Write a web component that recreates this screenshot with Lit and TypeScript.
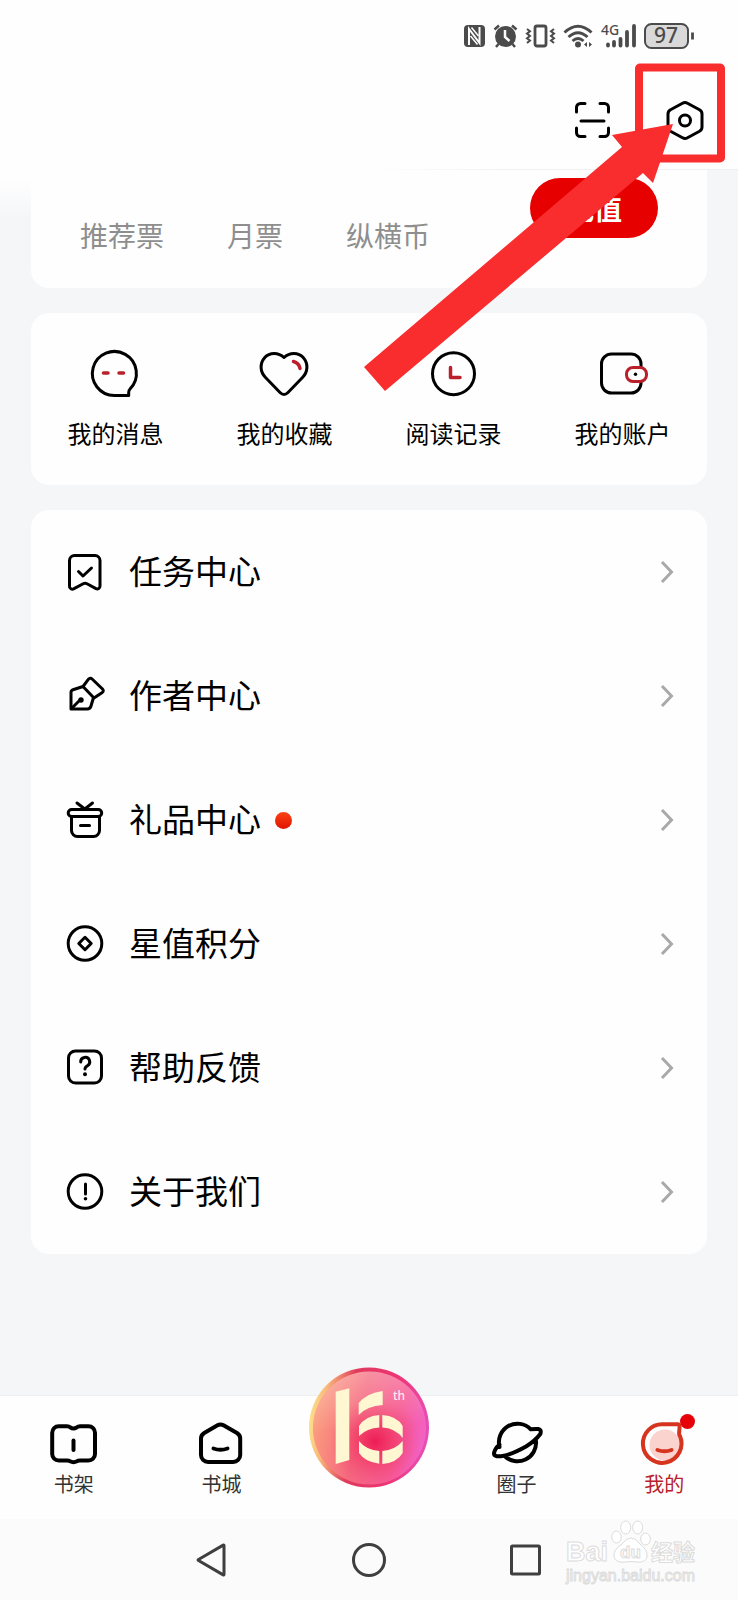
import { LitElement, html, svg, css, nothing, type TemplateResult } from "lit";
import { customElement, state } from "lit/decorators.js";

interface Entry {
  label: string;
  icon: TemplateResult;
  dot?: boolean;
}

const shortcuts: Entry[] = [
  {
    label: "我的消息",
    icon: svg`<path d="M24.5 47.5A22 22 0 1 1 40 41q-1.3 1.2-1.3 3.4v3.1z"/>
      <path class="accent" d="M13.5 25h4.5M29 25h4.5"/>`,
  },
  {
    label: "我的收藏",
    icon: svg`<path d="M25 9.5C19.5 4 10.5 4 5.8 9.5.5 15.5 1 24 6.5 29.5L21 44.5q4 4 8 0l14.500-15C49 24 49.500 15.500 44.200 9.500 39.500 4 30.500 4 25 9.500z"/>
      <path class="accent" d="M34.500 13.500q5.500 1.500 6.500 7"/>`,
  },
  {
    label: "阅读记录",
    icon: svg`<circle cx="25.500" cy="25.700" r="21"/><path class="accent" d="M22.500 19.500V29.500h9.500"/>`,
  },
  {
    label: "我的账户",
    icon: svg`<rect x="4.500" y="6" width="39.500" height="39" rx="10"/>
      <rect class="accent clasp" x="29.500" y="19.500" width="20" height="14" rx="6.500"/>
      <circle class="solid" cx="38.500" cy="26.300" r="1.700"/>`,
  },
];

const menu: Entry[] = [
  {
    label: "任务中心",
    icon: svg`<path d="M8.5 2.5H29a5 5 0 0 1 5 5V33a2.800 2.800 0 0 1-4 2.600l-9-4.800a4 4 0 0 0-3.800 0l-9.200 4.800a2.800 2.800 0 0 1-4.500-2.600V7.500a5 5 0 0 1 5-5z"/>
      <path d="M12.500 18.500l4.500 4.500 8.500-8"/>`,
  },
  {
    label: "作者中心",
    icon: svg`<path d="M5 32V15.500q0-2 2-2.800L17 9.500l10.500 11-2.500 8.500q-.8 3-3.800 3z"/>
      <path d="M17 9.500l5.500-7.300q1.700-2 3.600-.2L36.500 12q1.700 1.800-.2 3.400L28 21M6 31l8-8"/>
      <circle class="solid" cx="15" cy="23" r="2.700"/>`,
  },
  {
    label: "礼品中心",
    dot: true,
    icon: svg`<rect x="2.200" y="8.500" width="33.500" height="7" rx="3.500"/>
      <path d="M5.500 16v13.500a6 6 0 0 0 6 6h16a6 6 0 0 0 6-6V16M11 2l7.800 6L26.500 2M14.500 24.500h9"/>`,
  },
  {
    label: "星值积分",
    icon: svg`<circle cx="19" cy="18.500" r="16.800"/><path d="M19 12.300l6.200 6.200-6.200 6.200-6.200-6.200z"/>`,
  },
  {
    label: "帮助反馈",
    icon: svg`<rect x="2.500" y="2" width="33" height="32" rx="7"/>
      <path d="M14.700 13a4.500 4.500 0 1 1 6.600 3.800q-2.300 1.200-2.300 3.200"/><circle class="solid" cx="19" cy="25.200" r="2"/>`,
  },
  {
    label: "关于我们",
    icon: svg`<circle cx="19" cy="18.500" r="16.800"/><path d="M19.500 11v10"/><circle class="solid" cx="19.500" cy="25.800" r="1.800"/>`,
  },
];

const tabs: Entry[] = [
  {
    label: "书架",
    icon: svg`<path d="M8.700 6.300H17q2 0 3.500 1.200 3 2 6 0Q28 6.300 30 6.300h8.500a6.500 6.500 0 0 1 6.500 6.500V34a6.500 6.500 0 0 1-6.500 6.500H30q-2 0-3 .8-3.500 1.700-7 0-1-.8-3-.8H8.700A6.500 6.500 0 0 1 2.200 34V12.800a6.500 6.500 0 0 1 6.500-6.500z"/><path d="M23.500 20.500v9.500"/>`,
  },
  {
    label: "书城",
    icon: svg`<path d="M20.500 5.300q3-1.800 6 0L40 13q3.200 2 3.200 5.600V35a7 7 0 0 1-7 7H11a7 7 0 0 1-7-7V18.600Q4 15 7.200 13z"/><path d="M16.500 28.500q7 2.600 14 0"/>`,
  },
  {
    label: "16周年",
    icon: svg`
      <defs>
        <linearGradient id="rim" x1="0" y1=".45" x2="1" y2=".55">
          <stop offset="0" stop-color="#fbe08c"/><stop offset=".12" stop-color="#f8b878"/>
          <stop offset=".35" stop-color="#e03a5c"/>
          <stop offset=".7" stop-color="#ee3474"/><stop offset="1" stop-color="#e650b8"/>
        </linearGradient>
        <linearGradient id="face" x1="0" y1=".4" x2="1" y2=".6">
          <stop offset="0" stop-color="#fb9f7e"/><stop offset=".4" stop-color="#f5687e"/>
          <stop offset=".75" stop-color="#f65c96"/><stop offset="1" stop-color="#f262c8"/>
        </linearGradient>
        <radialGradient id="glow" cx=".55" cy=".62" r=".4">
          <stop offset="0" stop-color="#ec1450" stop-opacity=".9"/><stop offset=".4" stop-color="#f02c5c" stop-opacity=".6"/>
          <stop offset="1" stop-color="#f04070" stop-opacity="0"/>
        </radialGradient>
        <linearGradient id="shine" x1=".4" y1="0" x2=".5" y2="1">
          <stop offset="0" stop-color="#fff" stop-opacity=".28"/><stop offset=".5" stop-color="#fff" stop-opacity="0"/>
        </linearGradient>
      </defs>
      <circle cx="62" cy="62.500" r="60" fill="url(#rim)"/>
      <circle cx="62.500" cy="63" r="56.500" fill="url(#face)"/>
      <circle cx="62.500" cy="63" r="56.500" fill="url(#glow)"/>
      <circle cx="62.500" cy="63" r="56.500" fill="url(#shine)"/>
      <g fill="#fff6d2">
        <path d="M28.700 26.700l13.600-3.400V95l-13.600 4z"/>
        <path d="M51.700 50V38Q60 28 75.700 26v14Q60 41 51.700 50z"/>
        <path d="M52 71V61q6-10 20.300-11v12.500Q60 63 52 71z"/>
        <path d="M75.300 50Q90 51 95.700 61v12Q88 63 75.300 62.500z"/>
        <path d="M52 76q7 9 20.300 10v12.700Q58 97 52 88z"/>
        <path d="M75.300 86q13-1 20.400-10v12q-6 10-20.400 11z"/>
      </g>
      <text class="ordinal" x="86" y="35">th</text>`,
  },
  {
    label: "圈子",
    icon: svg`<path d="M6.500 27A18.600 18.600 0 0 1 37.800 9.300q4-.5 7.500-.3 3.500.7 2 5Q42 21 33 26.500 18 35 8 36.200 1 37 1 33.500 1.500 29 6.500 24.500M11.500 36A18.600 18.600 0 0 0 43 21"/>`,
  },
  {
    label: "我的",
    dot: true,
    icon: svg`<circle class="blush" cx="25" cy="25" r="15.500"/>
      <path d="M23.800 4.300h13.700q2.300 0 2.100 2.200l-.5 7q0 1.500.9 2.600a19.300 19.300 0 1 1-16.200-11.800z"/><path d="M17.500 30q7 2.600 14 0"/>`,
  },
];

const chevron = html`<svg class="chevron" width="14" height="24" viewBox="0 0 14 24" aria-hidden="true">
  <path d="M2 2l9.500 10L2 22" />
</svg>`;

@customElement("app-root")
export class AppRoot extends LitElement {
  @state() private current = "我的";

  static styles = css`
    :host {
      display: block;
      color: #000;
      font-family: "Noto Sans CJK SC", "Noto Sans", sans-serif;
    }
    * { box-sizing: border-box; }
    svg {
      display: block;
      flex: none;
      overflow: visible;
    }
    button, a {
      font: inherit;
      color: inherit;
      text-decoration: none;
      background: none;
      border: 0;
      padding: 0;
      margin: 0;
      cursor: pointer;
    }
    .page {
      position: relative;
      display: flex;
      flex-direction: column;
      min-height: 100vh;
      background: #f5f6f8;
      overflow: hidden;
    }
    .top { background: #fefefe; }
    .top::after {
      content: "";
      display: block;
      height: 1px;
      background: linear-gradient(90deg, #fefefe 50%, #f0f0f2 70%);
    }
    .status {
      display: flex;
      align-items: center;
      justify-content: flex-end;
      gap: 8px;
      height: 71px;
      padding-right: 44px;
      color: #4b4b4b;
    }
    .net, .level {
      font-family: "Noto Sans", sans-serif;
      fill: #4b4b4b;
    }
    .net { font-size: 14px; font-weight: 500; }
    .level { font-size: 21px; font-weight: 500; }
    .tools {
      display: flex;
      align-items: center;
      justify-content: flex-end;
      gap: 52px;
      height: 98px;
      padding-right: 33px;
    }
    .line {
      fill: none;
      stroke: currentColor;
      stroke-width: 3;
      stroke-linecap: round;
      stroke-linejoin: round;
    }
    .solid { fill: currentColor; stroke: none; }
    .content {
      flex: 1;
      display: flex;
      flex-direction: column;
      gap: 25px;
      padding: 0 31px 24px;
      background: linear-gradient(#fefefe 20%, #fefefe00) 0 0 / 31px 48px no-repeat;
    }
    .card {
      background: #fefefe;
      border-radius: 18px;
    }
    .wallet {
      display: flex;
      align-items: flex-start;
      justify-content: space-between;
      height: 118px;
      padding: 8px 49px;
      border-radius: 0 0 18px 18px;
    }
    .tickets {
      display: flex;
      gap: 63px;
      padding-top: 37px;
      font-size: 28px;
      line-height: 40px;
      color: #8e8e8e;
    }
    .recharge {
      width: 128px;
      height: 60px;
      border-radius: 30px;
      background: #e60000;
      color: #fff;
      font-size: 28px;
      font-weight: 700;
    }
    .shortcuts {
      display: grid;
      grid-template-columns: repeat(4, 1fr);
      height: 172px;
      padding-top: 35px;
    }
    .shortcut {
      display: flex;
      flex-direction: column;
      align-items: center;
      gap: 15px;
      font-size: 24px;
      line-height: 36px;
    }
    .accent { stroke: #b9202a; stroke-width: 3.5; }
    .clasp { fill: #fefefe; stroke-width: 3; }
    .menu { padding: 0 33px 0 35px; }
    .row {
      display: flex;
      align-items: center;
      width: 100%;
      height: 124px;
      font-size: 33px;
      line-height: 48px;
    }
    .row-label { padding: 0 0 4px 25px; }
    .chevron {
      margin-left: auto;
      fill: none;
      stroke: #a9a9a9;
      stroke-width: 3;
    }
    .dot {
      width: 17px;
      height: 17px;
      margin-left: 14px;
      border-radius: 50%;
      background: linear-gradient(#fa4414, #e01400);
    }
    .tabs {
      display: grid;
      grid-template-columns: repeat(5, 1fr);
      height: 124px;
      border-top: 1px solid #eceeef;
      background: #fefefe;
    }
    .tab {
      position: relative;
      display: flex;
      flex-direction: column;
      align-items: center;
      gap: 1px;
      padding-top: 24px;
      font-size: 20px;
      line-height: 30px;
      color: #333;
    }
    .tab .line { color: #000; stroke-width: 4; }
    .tab.active { color: #b9202a; }
    .tab.active .line { color: #d6341f; }
    .tab .blush { fill: #fad2ce; stroke: none; }
    .badge {
      position: absolute;
      left: calc(50% + 16px);
      top: 18px;
      width: 15px;
      height: 15px;
      border-radius: 50%;
      background: #e60008;
    }
    .tab.medal {
      display: block;
      padding: 0;
    }
    .medal-art {
      position: absolute;
      left: 50%;
      bottom: 30px;
      margin-left: -62px;
    }
    .ordinal {
      font: 500 12px "Noto Sans", sans-serif;
      fill: #fdebf2;
    }
    .nav {
      position: relative;
      display: flex;
      align-items: center;
      justify-content: center;
      gap: 117px;
      height: 81px;
      background: #fbfbfb;
      color: #3f3f3f;
    }
    .watermark {
      position: absolute;
      right: 38px;
      top: -1px;
      fill: #fff;
      stroke: #dcdcdc;
      stroke-width: 1;
      pointer-events: none;
    }
    .brand { font: 700 27px "Liberation Sans", sans-serif; }
    .pad { font: 700 17px "Liberation Sans", sans-serif; }
    .brand-cn { font: 700 22px "Noto Sans CJK SC", sans-serif; }
    .site { font: 400 16px "Liberation Sans", sans-serif; }
    .pointer {
      position: absolute;
      right: 13px;
      top: 63px;
      color: #f92c2e;
      pointer-events: none;
    }
  `;

  private statusBar() {
    return html`<div class="status">
      <svg width="21" height="24" viewBox="0 0 21 24" role="img" aria-label="NFC">
        <rect y="1" width="21" height="22" rx="4" fill="currentColor" />
        <path d="M5 21V5l10.500 14V3" fill="none" stroke="#fefefe" stroke-width="2" />
        <path d="M7.500 3.500l7 8.500M6.500 12l7 8.500" fill="none" stroke="#fefefe" stroke-width="1.500" />
      </svg>
      <svg width="25" height="24" viewBox="0 0 25 24" role="img" aria-label="闹钟">
        <circle cx="12.500" cy="12.500" r="10.500" fill="currentColor" />
        <path d="M1.500 5.500L6 1.500M23.500 5.500L19 1.500M5.500 20l-2.500 3M19.500 20l2.500 3" fill="none" stroke="currentColor" stroke-width="2.500" />
        <path d="M12 6v7l4.500 4" fill="none" stroke="#fefefe" stroke-width="2.500" />
      </svg>
      <svg width="29" height="24" viewBox="0 0 29 24" role="img" aria-label="振动">
        <rect x="9" y="2" width="11" height="20" rx="2" fill="none" stroke="currentColor" stroke-width="2.800" />
        <path d="M1 5l3 2.300-3 2.300 3 2.400-3 2.300 3 2.300-3 2.400M28 5l-3 2.300 3 2.300-3 2.400 3 2.300-3 2.300 3 2.400" fill="none" stroke="currentColor" stroke-width="2" />
      </svg>
      <svg width="31" height="24" viewBox="0 0 31 24" role="img" aria-label="无线网络">
        <path d="M1.500 8.500q13.500-12.500 27 0M5.500 13q9.500-8.500 19 0M9.500 17q5.500-5 11 0" fill="none" stroke="currentColor" stroke-width="3" />
        <circle cx="15" cy="20.500" r="3" fill="currentColor" />
        <path d="M24 18v5l-3-2.500zM26 18v5l3-2.500z" fill="currentColor" />
      </svg>
      <svg width="34" height="24" viewBox="0 0 34 24">
        <text class="net" x="-1" y="11">4G</text>
        <path d="M6 20.500v1M12 18v3.500M18.500 15v6.500M25 8v13.500M32 2v19.500" fill="none" stroke="currentColor" stroke-width="3.800" stroke-linecap="round" />
      </svg>
      <svg width="50" height="26" viewBox="0 0 50 26">
        <rect x="1" y="1" width="43" height="24" rx="6.500" fill="#d9d9d9" stroke="currentColor" stroke-width="2" />
        <path d="M48.500 9.500v7" stroke="currentColor" stroke-width="2.800" />
        <text class="level" x="22" y="20" text-anchor="middle">97</text>
      </svg>
    </div>`;
  }

  private tab(t: Entry) {
    if (t.label.startsWith("16")) {
      return html`<button class="tab medal" aria-label=${t.label}>
        <svg class="medal-art" width="124" height="124" viewBox="0 0 124 124">${t.icon}</svg>
      </button>`;
    }
    const active = this.current === t.label;
    return html`<button class="tab ${active ? "active" : ""}" @click=${() => (this.current = t.label)}>
      <svg class="line" width="48" height="48" viewBox="0 0 48 48" aria-hidden="true">${t.icon}</svg>
      <span>${t.label}</span>
      ${t.dot ? html`<span class="badge"></span>` : nothing}
    </button>`;
  }

  render() {
    return html`<div class="page">
      <header class="top">
        ${this.statusBar()}
        <div class="tools">
          <button aria-label="扫一扫">
            <svg class="line" width="40" height="40" viewBox="0 0 40 40">
              <path d="M3.500 12V7.500a4 4 0 0 1 4-4H12M27 3.500h4.500a4 4 0 0 1 4 4V12M35.500 28v4.500a4 4 0 0 1-4 4H27M12 36.500H7.500a4 4 0 0 1-4-4V28M8 21h23" />
            </svg>
          </button>
          <button aria-label="设置">
            <svg class="line" width="40" height="40" viewBox="0 0 40 40">
              <path d="M17.500 3.200q2.500-1.400 5 0l12 6.600q2.500 1.500 2.500 4.200v13q0 2.700-2.500 4.200l-12 6.600q-2.500 1.400-5 0l-12-6.600Q3 29.700 3 27V14q0-2.700 2.500-4.200z" />
              <circle cx="20" cy="20.500" r="5.500" />
            </svg>
          </button>
        </div>
      </header>

      <main class="content">
        <section class="card wallet">
          <div class="tickets"><span>推荐票</span><span>月票</span><span>纵横币</span></div>
          <button class="recharge">充值</button>
        </section>

        <nav class="card shortcuts">
          ${shortcuts.map(
            (s) => html`<a class="shortcut" href="#">
              <svg class="line" width="52" height="52" viewBox="0 0 52 52" aria-hidden="true">${s.icon}</svg>
              <span>${s.label}</span>
            </a>`
          )}
        </nav>

        <nav class="card menu">
          ${menu.map(
            (m) => html`<a class="row" href="#">
              <svg class="line" width="38" height="38" viewBox="0 0 38 38" aria-hidden="true">${m.icon}</svg>
              <span class="row-label">${m.label}</span>
              ${m.dot ? html`<span class="dot"></span>` : nothing} ${chevron}
            </a>`
          )}
        </nav>
      </main>

      <nav class="tabs">${tabs.map((t) => this.tab(t))}</nav>

      <footer class="nav">
        <button aria-label="返回">
          <svg class="line" width="40" height="40" viewBox="0 0 40 40"><path d="M32 5.500v29q0 .8-.8.400L6.500 20.500q-.9-.5 0-1L31.200 5.100q.8-.4.800.4z" /></svg>
        </button>
        <button aria-label="主屏幕">
          <svg class="line" width="40" height="40" viewBox="0 0 40 40"><circle cx="20" cy="20" r="15.500" /></svg>
        </button>
        <button aria-label="最近任务">
          <svg class="line" width="40" height="40" viewBox="0 0 40 40"><rect x="5.500" y="6" width="28" height="28" rx="1" /></svg>
        </button>
        <svg class="watermark" width="136" height="68" viewBox="0 0 136 68">
          <text class="brand" x="2" y="43">Bai</text>
          <ellipse cx="52.500" cy="19" rx="4.800" ry="6" />
          <ellipse cx="61.700" cy="9.500" rx="5" ry="6.500" />
          <ellipse cx="73.700" cy="9.500" rx="5" ry="6.500" />
          <ellipse cx="81.500" cy="21" rx="4.800" ry="6" />
          <path d="M67 20q5 0 9 6 8 6 7 13-2 6-10 5-6-1-12 0-9 1-11-5-1-7 8-13 4-6 9-6z" />
          <text class="pad" x="56" y="40">du</text>
          <text class="brand-cn" x="87" y="42">经验</text>
          <text class="site" x="2" y="63">jingyan.baidu.com</text>
        </svg>
      </footer>

      <svg class="pointer" width="361" height="328" viewBox="0 0 361 328" aria-hidden="true">
        <rect x="275" y="4.500" width="82" height="91" rx="1" fill="none" stroke="currentColor" stroke-width="8" stroke-linejoin="round" />
        <path d="M309 61l-61 11 10 12L0 304l21 24 258-218 10 10z" fill="currentColor" />
      </svg>
    </div>`;
  }
}
